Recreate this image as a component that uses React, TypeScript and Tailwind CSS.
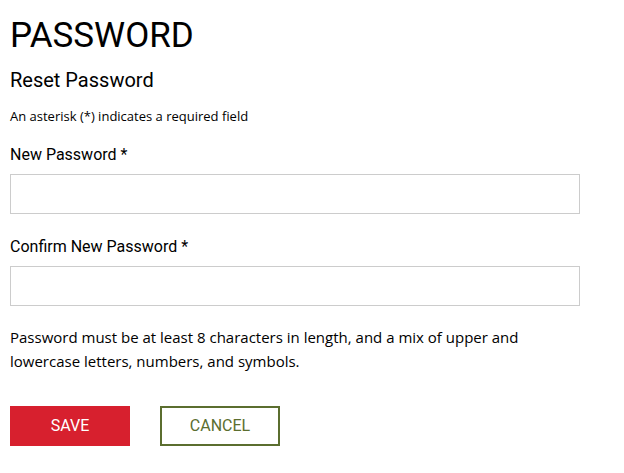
export default function App() {
  return (
    <div className="min-h-screen bg-white px-[10px] text-black">
      <div className="w-[570px]">
        <h1 className="pt-[18px] font-['Roboto',sans-serif] text-[35px] leading-none">PASSWORD</h1>
        <h2 className="mt-[15px] font-['Roboto',sans-serif] text-[20px] leading-[24px]">Reset Password</h2>
        <p className="mt-[15px] font-['Open_Sans',sans-serif] text-[13px] leading-[18px]">
          An asterisk (*) indicates a required field
        </p>

        <label className="mt-[19px] block font-['Roboto',sans-serif] text-[16px] leading-[22px]">New Password *</label>
        <input type="password" className="mt-[8px] block h-[40px] w-full border border-[#cccccc] px-3 outline-none" />

        <label className="mt-[22px] block font-['Roboto',sans-serif] text-[16px] leading-[22px]">Confirm New Password *</label>
        <input type="password" className="mt-[8px] block h-[40px] w-full border border-[#cccccc] px-3 outline-none" />

        <p className="mt-[19px] font-['Open_Sans',sans-serif] text-[15px] leading-[24px]">
          Password must be at least 8 characters in length, and a mix of upper and lowercase letters, numbers, and symbols.
        </p>

        <div className="mt-[33px] flex gap-[30px]">
          <button className="h-[40px] w-[120px] bg-[#d7202e] font-['Roboto',sans-serif] text-[16px] text-white">SAVE</button>
          <button className="h-[40px] w-[120px] border-2 border-[#5b6e2f] font-['Roboto',sans-serif] text-[16px] text-[#5b6e2f]">CANCEL</button>
        </div>
      </div>
    </div>
  )
}
